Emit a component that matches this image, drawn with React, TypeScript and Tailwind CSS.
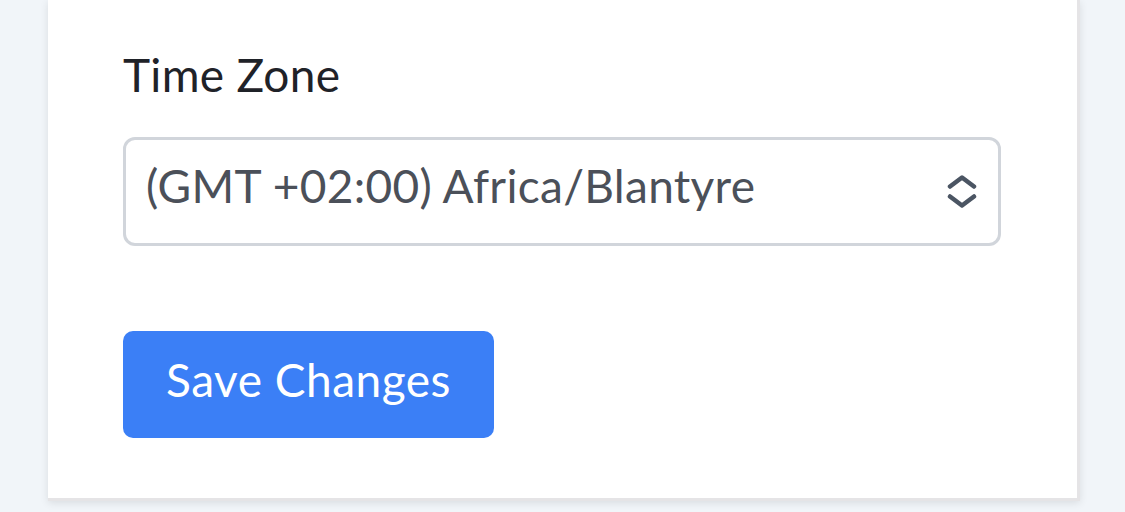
import React from "react";

function ChevronUpDown() {
  return (
    <svg width="30" height="33" viewBox="0 0 30 33" fill="none" className="shrink-0">
      <path d="M3 11.5 L15 2.5 L27 11.5" stroke="#4b5563" strokeWidth="4.5" strokeLinecap="round" strokeLinejoin="round" />
      <path d="M3 21.5 L15 30.5 L27 21.5" stroke="#4b5563" strokeWidth="4.5" strokeLinecap="round" strokeLinejoin="round" />
    </svg>
  );
}

export default function App() {
  return (
    <div className="w-full min-h-[512px] bg-[#f1f5f9] pb-[11px] font-['Lato',sans-serif]">
      <div className="ml-[48px] w-[1032px] bg-white shadow-[0_2px_8px_rgba(0,0,0,0.10)] border-b-[3px] border-r-[3px] border-[#e5e4e6] pt-[52px] pb-[60px] px-[75px]">
        <label className="block text-[46px] leading-[46px] tracking-[0.3px] text-[#1f2228]">Time Zone</label>
        <div className="mt-[39px] w-[878px] h-[109px] rounded-[12px] border-[3px] border-[#d1d5db] flex items-center justify-between pl-[20px] pr-[21px]">
          <span className="text-[46px] leading-[46px] tracking-[0.3px] text-[#4b5059] mb-[12px]">(GMT +02:00) Africa/Blantyre</span>
          <ChevronUpDown />
        </div>
        <button className="mt-[85px] w-[371px] h-[107px] pb-[10px] rounded-[10px] bg-[#3b7ff6] text-white text-[46px] leading-[46px] tracking-[0.5px]">
          Save Changes
        </button>
      </div>
    </div>
  );
}
